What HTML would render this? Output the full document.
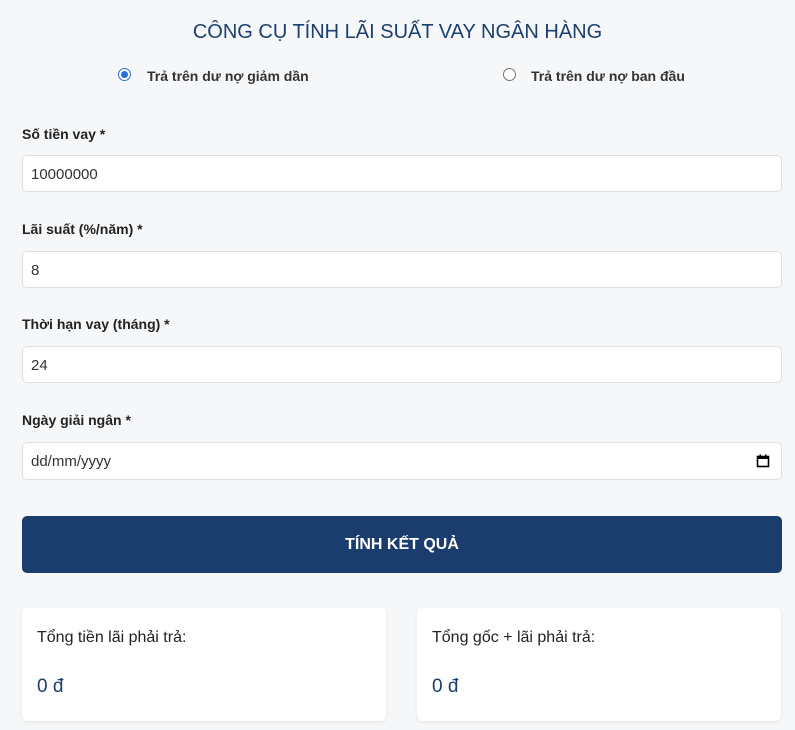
<!DOCTYPE html>
<html><head><meta charset="utf-8"><style>
body{margin:0;background:#f6f7f9;font-family:"Liberation Sans",Arial,sans-serif;width:795px;height:730px;overflow:hidden;position:relative;color:#222}
.a{position:absolute}
h1{position:absolute;top:21px;left:0;width:795px;text-align:center;margin:0;font-weight:normal;font-size:20px;color:#1b3f6e}
.rad{font-size:14px;font-weight:bold;color:#333}
.rb{position:absolute;width:11px;height:11px;border:1px solid #767676;border-radius:50%;background:#fff}
.lab{left:22px;font-size:14px;font-weight:bold;color:#222}
.inp{left:22px;width:760px;height:37px;background:#fff;border:1px solid #dcdfe3;border-radius:5px;box-sizing:border-box;font-size:15px;color:#333;padding:10px 8px}
.btn{left:22px;top:516px;width:760px;height:57px;background:#1b3d6e;border-radius:5px;color:#fff;font-weight:bold;font-size:16px;text-align:center;line-height:57px}
.card{top:608px;width:364px;height:113px;background:#fff;border-radius:5px;box-shadow:0 1px 3px rgba(0,0,0,.08)}
.card .t{position:absolute;left:15px;top:21px;font-size:16px;color:#222}
.card .v{position:absolute;left:15px;top:68px;font-size:19px;color:#1b3f6e}
</style></head><body>
<h1>CÔNG CỤ TÍNH LÃI SUẤT VAY NGÂN HÀNG</h1>
<div class="rb" style="left:118px;top:68px;border-color:#2a6fd6"><div style="position:absolute;left:2px;top:2px;width:7px;height:7px;border-radius:50%;background:#2a6fd6"></div></div>
<div class="a rad" style="left:147px;top:68px">Trả trên dư nợ giảm dần</div>
<div class="rb" style="left:503px;top:68px"></div>
<div class="a rad" style="left:531px;top:68px">Trả trên dư nợ ban đầu</div>
<div class="a lab" style="top:126px">Số tiền vay *</div>
<div class="a inp" style="top:155px">10000000</div>
<div class="a lab" style="top:221px">Lãi suất (%/năm) *</div>
<div class="a inp" style="top:251px">8</div>
<div class="a lab" style="top:316px">Thời hạn vay (tháng) *</div>
<div class="a inp" style="top:346px">24</div>
<div class="a lab" style="top:412px">Ngày giải ngân *</div>
<div class="a inp" style="top:442px;height:38px">dd/mm/yyyy</div>
<svg class="a" style="left:756px;top:454px" width="14" height="14" viewBox="0 0 14 14"><rect x="1.5" y="2.5" width="11" height="10" fill="none" stroke="#000" stroke-width="1.6"/><rect x="1.5" y="2" width="11" height="3" fill="#000"/><rect x="3.5" y="0.5" width="1.5" height="2" fill="#000"/><rect x="9" y="0.5" width="1.5" height="2" fill="#000"/></svg>
<div class="a btn">TÍNH KẾT QUẢ</div>
<div class="a card" style="left:22px"><div class="t">Tổng tiền lãi phải trả:</div><div class="v">0 đ</div></div>
<div class="a card" style="left:417px"><div class="t">Tổng gốc + lãi phải trả:</div><div class="v">0 đ</div></div>
</body></html>
